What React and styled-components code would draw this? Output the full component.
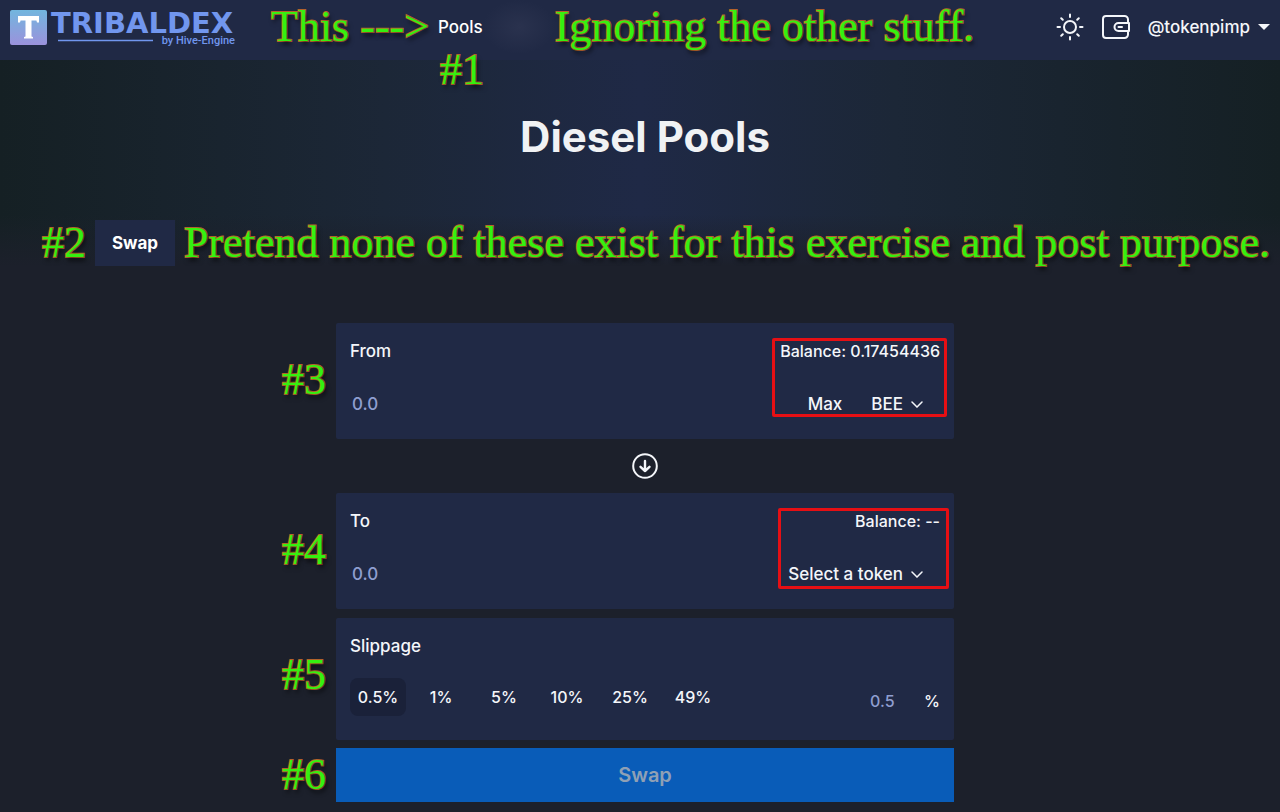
import React, { useState } from "react";
import styled, { createGlobalStyle } from "styled-components";

const GlobalStyle = createGlobalStyle`
  * {
    box-sizing: border-box;
  }

  body {
    margin: 0;
    background: #1c202b;
    color: #f4f6fa;
    font-family: Inter, "Noto Sans", sans-serif;
    font-size: 17px;
    font-weight: 500;
    line-height: 24px;
    overflow-x: hidden;
  }

  button,
  input,
  select {
    font: inherit;
    color: inherit;
  }
`;

const Header = styled.header`
  height: 60px;
  display: flex;
  align-items: center;
  padding: 0 10px 6px;
  background: #202945;
  white-space: nowrap;
`;

const Logo = styled.a`
  display: flex;
  margin-right: 34px;
`;

const Note = styled.span`
  font-family: "Liberation Serif", serif;
  font-size: 44px;
  font-weight: 400;
  line-height: 46px;
  color: #35f010;
  white-space: nowrap;
  -webkit-text-stroke: 2px #b4642c;
  paint-order: stroke fill;
  text-shadow: 2px 4px 4px rgba(0, 0, 0, 0.6);
`;

const Nav = styled.nav`
  position: relative;
  margin-left: 9px;
`;

const NavLink = styled.a`
  color: #ffffff;
  text-decoration: none;
`;

const NavNote = styled(Note)`
  position: absolute;
  top: 32px;
  left: 2px;
  z-index: 1;
`;

const Smudge = styled.div`
  width: 72px;
  height: 54px;
  background: radial-gradient(closest-side, #2a324e, #202945);
`;

const UserArea = styled.div`
  margin-left: auto;
  display: flex;
  align-items: center;
  gap: 17px;
`;

const PlainButton = styled.button`
  display: flex;
  align-items: center;
  gap: 8px;
  padding: 0;
  border: 0;
  background: none;
  cursor: pointer;
`;

const Caret = styled.span`
  border: 6px solid transparent;
  border-top-color: #f4f6fa;
  border-bottom: 0;
`;

const Hero = styled.section`
  padding-top: 49px;
  background:
    linear-gradient(to bottom, rgba(28, 32, 43, 0) 75%, #1c202b),
    linear-gradient(to right, #152024, #1c2737 30%, #1f2946 50%, #1c2737 70%, #152024);
`;

const Title = styled.h1`
  margin: 0 0 55px;
  padding-left: 10px;
  text-align: center;
  font-size: 42px;
  font-weight: 700;
  line-height: 56px;
  color: #f0f2f4;
`;

const Tabs = styled.div`
  display: flex;
  align-items: center;
  gap: 9px;
  padding-left: 42px;
`;

const Tab = styled.button`
  width: 80px;
  height: 46px;
  flex: none;
  border: 0;
  background: #202945;
  color: #ffffff;
  font-weight: 700;
  cursor: pointer;
`;

const Main = styled.main`
  padding: 57px 0 10px 10px;
`;

const Form = styled.form`
  width: 100%;
  max-width: 618px;
  margin: 0 auto;
`;

const Panel = styled.section`
  position: relative;
  padding: 16px 14px ${(p) => (p.$tall ? 24 : 18)}px;
  margin-bottom: ${(p) => (p.$tall ? 8 : 9)}px;
  border-radius: 2px;
  background: #202945;
`;

const StepNote = styled(Note)`
  position: absolute;
  left: -54px;
  top: ${(p) => (p.$low ? 34 : 4)}px;
`;

const Row = styled.div`
  display: flex;
  align-items: center;
  justify-content: space-between;
`;

const Balance = styled.span`
  font-size: 16px;
`;

const Controls = styled(Row)`
  height: 34px;
  margin-top: 24px;
`;

const AmountInput = styled.input`
  width: 200px;
  padding: 0 2px;
  border: 0;
  outline: none;
  background: none;
  color: #8f9ed0;

  &::placeholder {
    color: #8f9ed0;
    opacity: 1;
  }
`;

const TokenGroup = styled.div`
  display: flex;
  align-items: center;
  gap: 29px;
  padding-right: 17px;
`;

const SelectWrap = styled.span`
  position: relative;
  display: flex;
  align-items: center;

  svg {
    position: absolute;
    right: 0;
    pointer-events: none;
  }
`;

const TokenSelect = styled.select`
  appearance: none;
  field-sizing: content;
  padding: 0 20px 0 0;
  border: 0;
  outline: none;
  background: none;
  cursor: pointer;

  option {
    background: #202945;
  }
`;

const Highlight = styled.div`
  position: absolute;
  top: 15px;
  right: ${(p) => p.$right}px;
  width: ${(p) => p.$width}px;
  height: ${(p) => p.$height}px;
  border: 3px solid #e60f14;
  border-radius: 2px;
  pointer-events: none;
`;

const SwitchRow = styled.div`
  height: 54px;
  margin-top: -9px;
  display: flex;
  align-items: center;
  justify-content: center;
`;

const SlippageRow = styled.div`
  display: flex;
  align-items: flex-end;
  justify-content: space-between;
  margin-top: 20px;
  font-size: 16px;
`;

const Options = styled.div`
  display: flex;
  gap: 7px;
`;

const Option = styled.button`
  width: 56px;
  height: 38px;
  padding: 0;
  border: 0;
  border-radius: 8px;
  background: ${(p) => (p.$active ? "#1a2139" : "transparent")};
  cursor: pointer;
`;

const Custom = styled.label`
  display: flex;
  align-items: center;
  height: 30px;
`;

const CustomInput = styled(AmountInput)`
  width: 56px;
`;

const Submit = styled.button`
  display: block;
  width: 100%;
  height: 54px;
  border: 0;
  background: #095cb8;
  color: #8fa0b5;
  font-size: 20px;
  font-weight: 600;
`;

const SubmitWrap = styled.div`
  position: relative;
`;

const LogoArt = () => (
  <svg width="227" height="46" viewBox="0 0 227 46" role="img" aria-label="Tribaldex by Hive-Engine">
    <defs>
      <linearGradient id="tile" x1="0" y1="0" x2="0" y2="1">
        <stop offset="0" stopColor="#72b6de" />
        <stop offset="1" stopColor="#9b92dc" />
      </linearGradient>
    </defs>
    <rect x="0" y="6" width="37" height="35" rx="2" fill="url(#tile)" />
    <path d="M8 12h21v6.500h-2l-.6-2H21.500v16l1.500.5v1.500h-9v-1.500l1.500-.5v-16h-4.900l-.6 2H8z" fill="#fff" />
    <text x="41" y="29" fontFamily="DejaVu Sans" fontWeight="700" fontSize="29" fill="#7196ee">
      TRIBALDEX
    </text>
    <path d="M48 36.500h95" stroke="#7196ee" strokeWidth="1.500" />
    <text x="225" y="40" textAnchor="end" fontFamily="Roboto" fontWeight="500" fontSize="11" fill="#7196ee">
      by Hive-Engine
    </text>
  </svg>
);

const SunIcon = () => (
  <svg width="28" height="28" viewBox="0 0 28 28" fill="none" stroke="#f4f6fa" strokeWidth="2" strokeLinecap="round">
    <circle cx="14" cy="14" r="6" />
    <path d="M14 1.500v2.500M14 24v2.500M1.500 14H4M24 14h2.500M5.200 5.200l1.600 1.600M21.200 21.200l1.600 1.600M5.200 22.800l1.600-1.600M21.200 6.800l1.600-1.600" />
  </svg>
);

const WalletIcon = () => (
  <svg width="30" height="26" viewBox="0 0 30 26" fill="none" stroke="#f4f6fa" strokeWidth="2">
    <path d="M27 9V5.500a3.500 3.500 0 0 0-3.500-3.500H5a3 3 0 0 0-3 3v16a3 3 0 0 0 3 3h18.500a3.500 3.500 0 0 0 3.500-3.500V17" />
    <path d="M28 9H17.500a4 4 0 0 0 0 8H28z" strokeLinejoin="round" />
    <path d="M17.500 13H21" strokeLinecap="round" />
  </svg>
);

const Chevron = () => (
  <svg width="12" height="8" viewBox="0 0 12 8" fill="none" stroke="#f4f6fa" strokeWidth="1.500" strokeLinecap="round">
    <path d="M1 2l5 5 5-5" />
  </svg>
);

const SwitchIcon = () => (
  <svg width="26" height="26" viewBox="0 0 26 26" fill="none" stroke="#f4f6fa" strokeWidth="2" strokeLinecap="round" strokeLinejoin="round">
    <circle cx="13" cy="13" r="11.800" />
    <path d="M13 8v10M8.500 13.800L13 18l4.500-4.200" strokeWidth="2.400" />
  </svg>
);

const slippageOptions = ["0.5", "1", "5", "10", "25", "49"];

const TokenPanel = ({ id, label, balance, tokens, showMax, step, highlight }) => (
  <Panel>
    <StepNote $low>{step}</StepNote>
    <Row>
      <label htmlFor={id}>{label}</label>
      <Balance>Balance: {balance}</Balance>
    </Row>
    <Controls>
      <AmountInput id={id} placeholder="0.0" />
      <TokenGroup>
        {showMax && <PlainButton type="button">Max</PlainButton>}
        <SelectWrap>
          <TokenSelect aria-label={`${label} token`}>
            {tokens.map((t) => (
              <option key={t}>{t}</option>
            ))}
          </TokenSelect>
          <Chevron />
        </SelectWrap>
      </TokenGroup>
    </Controls>
    <Highlight $right={highlight.right} $width={highlight.width} $height={highlight.height} />
  </Panel>
);

const App = () => {
  const [slippage, setSlippage] = useState("0.5");

  return (
    <>
      <GlobalStyle />
      <Header>
        <Logo href="#">
          <LogoArt />
        </Logo>
        <Note>This ---&gt;</Note>
        <Nav>
          <NavLink href="#pools">Pools</NavLink>
          <NavNote>#1</NavNote>
        </Nav>
        <Smudge />
        <Note>Ignoring the other stuff.</Note>
        <UserArea>
          <PlainButton type="button" aria-label="Toggle theme">
            <SunIcon />
          </PlainButton>
          <PlainButton type="button" aria-label="Wallet">
            <WalletIcon />
          </PlainButton>
          <PlainButton type="button">
            @tokenpimp
            <Caret />
          </PlainButton>
        </UserArea>
      </Header>

      <Hero>
        <Title>Diesel Pools</Title>
        <Tabs>
          <Note>#2</Note>
          <Tab type="button">Swap</Tab>
          <Note>Pretend none of these exist for this exercise and post purpose.</Note>
        </Tabs>
      </Hero>

      <Main>
        <Form onSubmit={(e) => e.preventDefault()}>
          <TokenPanel
            id="from"
            label="From"
            balance="0.17454436"
            tokens={["BEE"]}
            showMax
            step="#3"
            highlight={{ right: 7, width: 175, height: 79 }}
          />
          <SwitchRow>
            <PlainButton type="button" aria-label="Switch tokens">
              <SwitchIcon />
            </PlainButton>
          </SwitchRow>
          <TokenPanel
            id="to"
            label="To"
            balance="--"
            tokens={["Select a token"]}
            step="#4"
            highlight={{ right: 5, width: 171, height: 81 }}
          />

          <Panel $tall>
            <StepNote $low>#5</StepNote>
            <label htmlFor="slippage">Slippage</label>
            <SlippageRow>
              <Options>
                {slippageOptions.map((value) => (
                  <Option
                    key={value}
                    type="button"
                    $active={value === slippage}
                    aria-pressed={value === slippage}
                    onClick={() => setSlippage(value)}
                  >
                    {value}%
                  </Option>
                ))}
              </Options>
              <Custom>
                <CustomInput
                  id="slippage"
                  value={slippage}
                  onChange={(e) => setSlippage(e.target.value)}
                />
                %
              </Custom>
            </SlippageRow>
          </Panel>

          <SubmitWrap>
            <StepNote>#6</StepNote>
            <Submit type="submit" disabled>
              Swap
            </Submit>
          </SubmitWrap>
        </Form>
      </Main>
    </>
  );
};

export default App;
